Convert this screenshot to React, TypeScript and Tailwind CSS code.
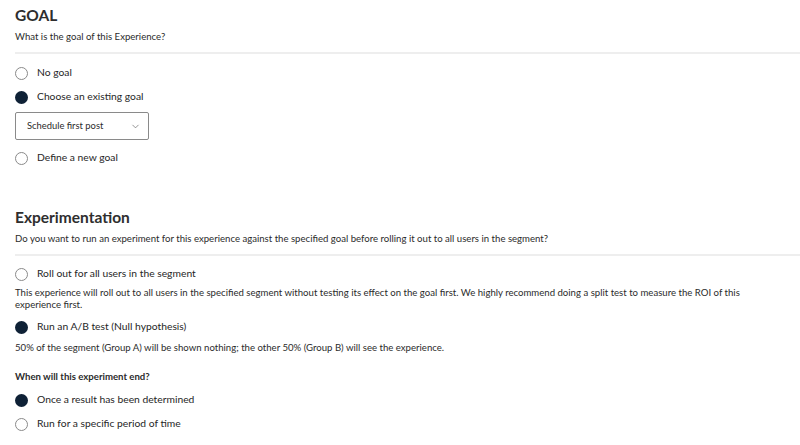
import { ChevronDown } from "lucide-react";

type RadioProps = { label: string; checked?: boolean };

function Radio({ label, checked = false }: RadioProps) {
    return (
        <label className="flex items-center gap-[9px] h-[24px]">
            {checked ? (
                <span className="w-[13px] h-[13px] rounded-full bg-[#0f2136] ml-[15px]" />
            ) : (
                <span className="w-[13px] h-[13px] rounded-full border border-[#8a8a8a] bg-white ml-[15px]" />
            )}
            <span className="text-[10.3px] text-[#262626]">{label}</span>
        </label>
    );
}

export default function App() {
    return (
        <div className="w-[800px] h-[445px] overflow-hidden bg-white text-[#2b2b2b]" style={{ fontFamily: "Lato, 'Noto Sans', sans-serif" }}>
            {/* Goal section */}
            <div className="pt-[3px]">
                <h2 className="px-[15px] text-[15.5px] font-bold leading-[24px] text-[#2e2e2e]">GOAL</h2>
                <p className="px-[15px] text-[9.6px] leading-[18px] mt-[1px]">What is the goal of this Experience?</p>
                <div className="ml-[15px] mt-[6px] h-[2px] bg-[#eeeeee]" />
                <div className="mt-[7px] flex flex-col">
                    <Radio label="No goal" />
                    <Radio label="Choose an existing goal" checked />
                    <div className="ml-[15px] mt-[3px] mb-[6px] w-[134px] h-[28px] border border-[#8a8a8a] rounded-[2px] flex items-center justify-between pl-[11px] pr-[7px]">
                        <span className="text-[9.4px]">Schedule first post</span>
                        <ChevronDown size={11} strokeWidth={1.5} className="text-[#666]" />
                    </div>
                    <Radio label="Define a new goal" />
                </div>
            </div>

            {/* Experimentation section */}
            <div className="mt-[35px]">
                <h2 className="px-[15px] text-[15.5px] font-bold leading-[24px] text-[#2e2e2e]">Experimentation</h2>
                <p className="px-[15px] text-[9.6px] leading-[18px] mt-[1px]">
                    Do you want to run an experiment for this experience against the specified goal before rolling it out to all users in the segment?
                </p>
                <div className="ml-[15px] mt-[6px] h-[2px] bg-[#eeeeee]" />
                <div className="mt-[6px]">
                    <Radio label="Roll out for all users in the segment" />
                    <p className="px-[15px] pr-[50px] text-[9.6px] leading-[12px] mt-[1px]">
                        This experience will roll out to all users in the specified segment without testing its effect on the goal first. We highly recommend doing a split test to measure the ROI of this experience first.
                    </p>
                    <div className="mt-[4px]">
                        <Radio label="Run an A/B test (Null hypothesis)" checked />
                    </div>
                    <p className="px-[15px] text-[9.6px] leading-[14px] mt-[2px]">
                        50% of the segment (Group A) will be shown nothing; the other 50% (Group B) will see the experience.
                    </p>
                    <p className="px-[15px] text-[9.6px] font-bold leading-[14px] mt-[15px]">When will this experiment end?</p>
                    <div className="mt-[4px]">
                        <Radio label="Once a result has been determined" checked />
                        <Radio label="Run for a specific period of time" />
                    </div>
                </div>
            </div>
        </div>
    );
}
